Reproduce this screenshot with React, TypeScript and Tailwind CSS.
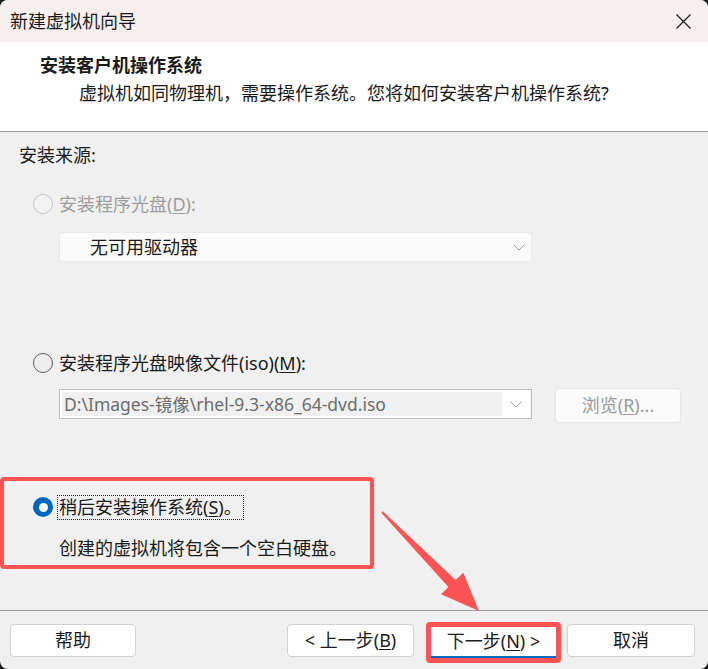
import React from "react";

function Radio({ state }: { state: "disabled" | "off" | "on" }) {
  if (state === "on") {
    return (
      <span className="w-[20px] h-[20px] rounded-full bg-[#0067c0] flex items-center justify-center shrink-0">
        <span className="w-[9px] h-[9px] rounded-full bg-white" />
      </span>
    );
  }
  if (state === "disabled") {
    return <span className="w-[20px] h-[20px] rounded-full border border-[#c6c6c6] bg-[#f4f4f4] shrink-0" />;
  }
  return <span className="w-[20px] h-[20px] rounded-full border border-[#5c5c5c] bg-[#eeeeee] shrink-0" />;
}

function Chevron() {
  return (
    <svg width="12" height="7" viewBox="0 0 12 7" fill="none">
      <polyline points="0.5,0.5 6,6 11.5,0.5" stroke="#a3a3a3" strokeWidth="1" />
    </svg>
  );
}

function App() {
  return (
    <div className="w-[708px] h-[669px] bg-[#1e1e1e]">
      <div className="relative w-full h-full rounded-[8px] overflow-hidden bg-[#f0f0f0] flex flex-col font-['Segoe_UI','Noto_Sans','Noto_Sans_CJK_SC',sans-serif] text-[18px] text-[#1a1a1a]">
        {/* Title bar */}
        <div className="h-[42px] shrink-0 bg-[#f6efee] flex items-center justify-between pl-[10px] pr-[17px]">
          <span className="leading-[24px]">新建虚拟机向导</span>
          <svg width="15" height="15" viewBox="0 0 15 15" fill="none">
            <path d="M0.5 0.5 L14.5 14.5 M14.5 0.5 L0.5 14.5" stroke="#1a1a1a" strokeWidth="1.2" />
          </svg>
        </div>

        {/* Header */}
        <div className="h-[90px] shrink-0 bg-white border-b border-[#a0a0a0] pl-[40px] pt-[11px]">
          <p className="font-bold leading-[24px]">安装客户机操作系统</p>
          <p className="ml-[39px] mt-[4px] leading-[24px]">
            虚拟机如同物理机，需要操作系统。您将如何安装客户机操作系统?
          </p>
        </div>

        {/* Body */}
        <div className="flex-1">
          <p className="pl-[19px] mt-[11px] leading-[24px]">安装来源:</p>

          <div className="flex items-center gap-[6px] pl-[33px] mt-[25px] h-[24px] text-[#9d9d9d]">
            <Radio state="disabled" />
            <span>
              安装程序光盘(<span className="underline underline-offset-2">D</span>):
            </span>
          </div>

          <div className="ml-[59px] mt-[16px] w-[473px] h-[30px] bg-[#fafafa] border border-[#e9e9e9] rounded-[3px] flex items-center justify-between pl-[30px] pr-[6px]">
            <span>无可用驱动器</span>
            <Chevron />
          </div>

          <div className="flex items-center gap-[6px] pl-[33px] mt-[89px] h-[24px]">
            <Radio state="off" />
            <span>
              安装程序光盘映像文件(iso)(<span className="underline underline-offset-2">M</span>):
            </span>
          </div>

          <div className="ml-[59px] mt-[13px] flex items-start">
            <div className="mt-[1px] w-[473px] h-[30px] bg-white border border-[#bcbcbc] p-[2px] flex">
              <div className="flex-1 bg-[#f0f0f0] flex items-center pl-[2px] text-[17.5px] text-[#6d6d6d] whitespace-nowrap overflow-hidden">
                D:\Images-镜像\rhel-9.3-x86_64-dvd.iso
              </div>
              <div className="w-[27px] flex items-center justify-center">
                <Chevron />
              </div>
            </div>
            <div className="ml-[23px] w-[126px] h-[35px] bg-[#fafafa] border border-[#e6e6e6] rounded-[4px] flex items-center justify-center text-[#9a9a9a]">
              浏览(<span className="underline underline-offset-2">R</span>)...
            </div>
          </div>

          <div className="mt-[54px] w-[374px] h-[92px] border-4 border-[#ff5353] rounded-[4px] pt-[14px] pl-[29px]">
            <div className="flex items-center gap-[4px] h-[24px]">
              <Radio state="on" />
              <span className="border border-dotted border-[#222] px-[1px] leading-[23px]">
                稍后安装操作系统(<span className="underline underline-offset-2">S</span>)。
              </span>
            </div>
            <p className="mt-[17px] ml-[26px] leading-[24px]">创建的虚拟机将包含一个空白硬盘。</p>
          </div>
        </div>

        {/* Footer */}
        <div className="h-[59px] shrink-0 border-t border-[#a0a0a0] flex items-start justify-between pl-[10px] pr-[13px] pt-[13px]">
          <button className="w-[126px] h-[33px] bg-white border border-[#d3d3d3] rounded-[4px]">帮助</button>
          <div className="flex items-start">
            <button className="w-[127px] h-[33px] bg-white border border-[#d3d3d3] rounded-[4px]">
              &lt; 上一步(<span className="underline underline-offset-2">B</span>)
            </button>
            <div className="ml-[12px] -mt-[2px] w-[135px] h-[41px] border-[5px] border-[#ff5353] rounded-[4px]">
              <button className="w-full h-full bg-white border-b-2 border-[#0067c0]">
                下一步(<span className="underline underline-offset-2">N</span>) &gt;
              </button>
            </div>
            <button className="ml-[6px] w-[128px] h-[33px] bg-white border border-[#d3d3d3] rounded-[4px]">取消</button>
          </div>
        </div>

        {/* Annotation arrow */}
        <svg className="absolute inset-0 pointer-events-none" width="708" height="669" viewBox="0 0 708 669">
          <polygon
            points="382.7,511.3 455.6,580 463.3,572.7 479,611 441,594.3 448.4,587 381.3,512.7"
            fill="#ff5353"
          />
        </svg>
      </div>
    </div>
  );
}

export default App;
